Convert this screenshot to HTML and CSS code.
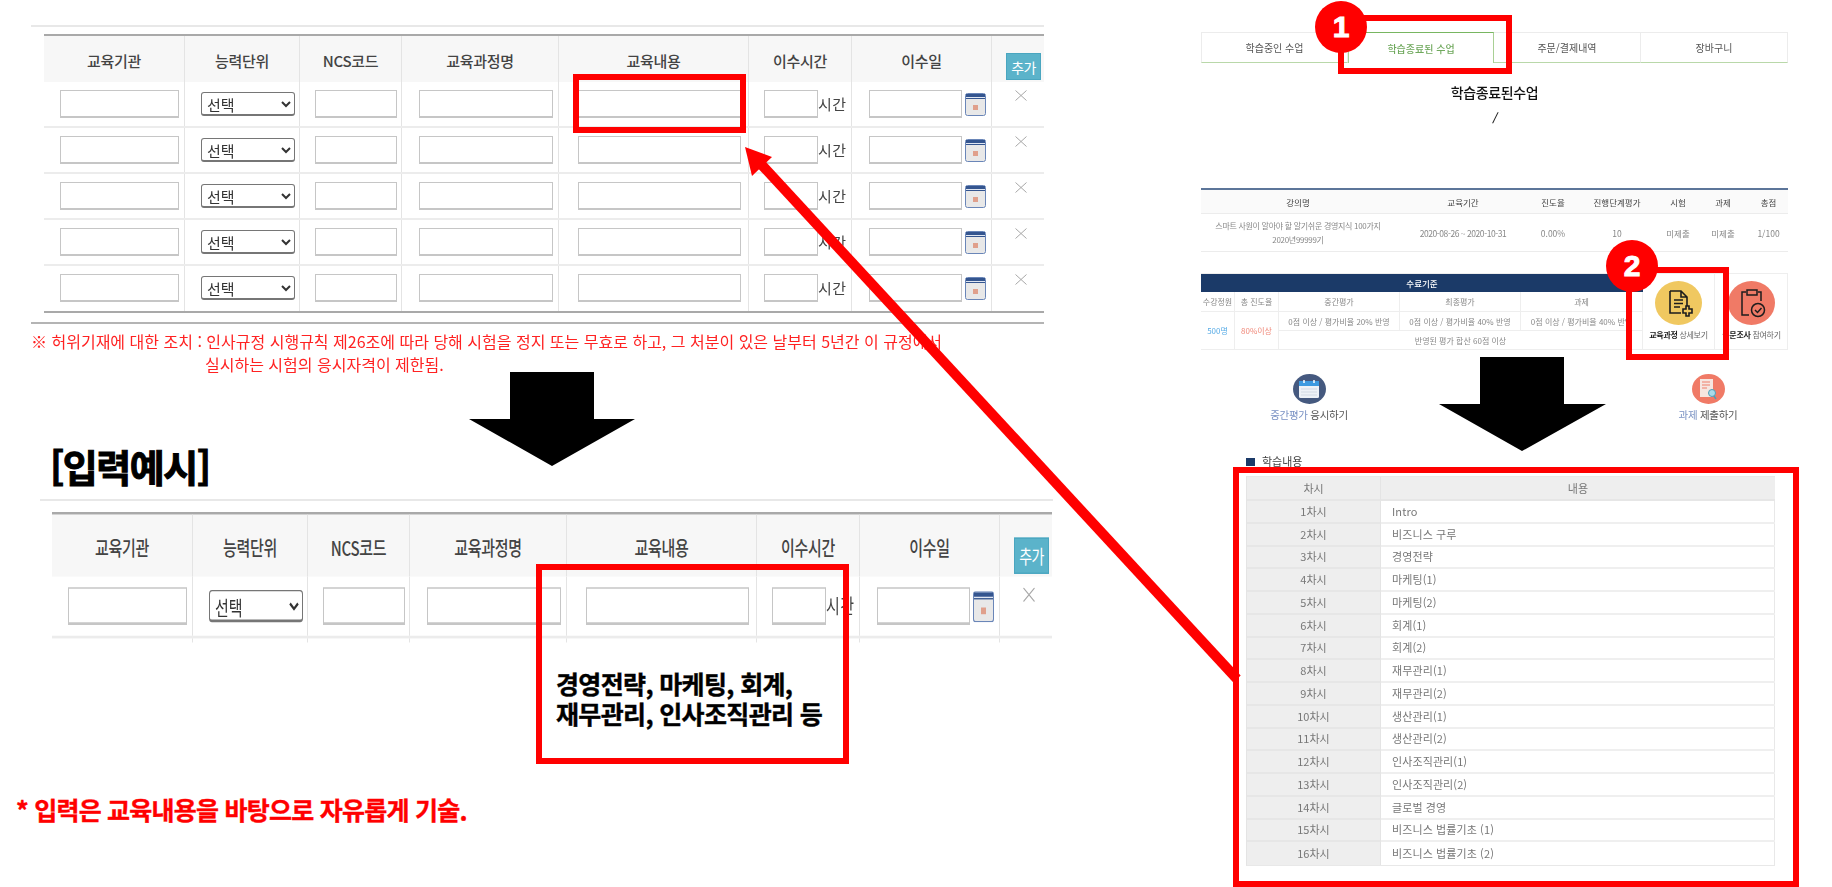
FILE: index.html
```html
<!DOCTYPE html>
<html lang="ko">
<head>
<meta charset="utf-8">
<title>학습종료된수업 입력예시</title>
<link rel="stylesheet" href="styles.css">
</head>
<body>
<svg class="defs" width="0" height="0">
  <symbol id="cal" viewBox="0 0 21 23">
    <rect x="0.5" y="0.5" width="20" height="22" rx="2" fill="#e8e8e8" stroke="#6a86b8"/>
    <rect x="1" y="1" width="19" height="5" fill="#34558f"/>
    <rect x="1" y="4" width="19" height="1" fill="#dfe6f2"/>
    <rect x="8" y="12" width="5" height="5" fill="#e0a08c"/>
  </symbol>
  <symbol id="del" viewBox="0 0 12 11">
    <path d="M0.5 0.5 L11.500 10.500 M11.500 0.5 L0.5 10.500" stroke="#a8a8a8" stroke-width="1" fill="none"/>
  </symbol>
</svg>
<main class="canvas">

  <section class="form form-a">
    <div class="frow fhead">
      <div>교육기관</div><div>능력단위</div><div>NCS코드</div><div>교육과정명</div><div>교육내용</div><div>이수시간</div><div>이수일</div><div class="addcell"><button class="add">추가</button></div>
    </div>
    <div class="frow">
      <div><input class="w1"></div><div><select class="sel"><option>선택</option></select></div><div><input class="w3"></div><div><input class="w4"></div><div><input class="w5"></div><div><input class="w6"><span>시간</span></div><div><input class="w7"><svg class="cal"><use href="#cal"/></svg></div><div class="xcell"><svg class="x"><use href="#del"/></svg></div>
    </div>
    <div class="frow">
      <div><input class="w1"></div><div><select class="sel"><option>선택</option></select></div><div><input class="w3"></div><div><input class="w4"></div><div><input class="w5"></div><div><input class="w6"><span>시간</span></div><div><input class="w7"><svg class="cal"><use href="#cal"/></svg></div><div class="xcell"><svg class="x"><use href="#del"/></svg></div>
    </div>
    <div class="frow">
      <div><input class="w1"></div><div><select class="sel"><option>선택</option></select></div><div><input class="w3"></div><div><input class="w4"></div><div><input class="w5"></div><div><input class="w6"><span>시간</span></div><div><input class="w7"><svg class="cal"><use href="#cal"/></svg></div><div class="xcell"><svg class="x"><use href="#del"/></svg></div>
    </div>
    <div class="frow">
      <div><input class="w1"></div><div><select class="sel"><option>선택</option></select></div><div><input class="w3"></div><div><input class="w4"></div><div><input class="w5"></div><div><input class="w6"><span>시간</span></div><div><input class="w7"><svg class="cal"><use href="#cal"/></svg></div><div class="xcell"><svg class="x"><use href="#del"/></svg></div>
    </div>
    <div class="frow flast">
      <div><input class="w1"></div><div><select class="sel"><option>선택</option></select></div><div><input class="w3"></div><div><input class="w4"></div><div><input class="w5"></div><div><input class="w6"><span>시간</span></div><div><input class="w7"><svg class="cal"><use href="#cal"/></svg></div><div class="xcell"><svg class="x"><use href="#del"/></svg></div>
    </div>
  </section>

  <div class="rule rule-a1"></div>
  <div class="rule rule-a2"></div>
  <div class="warn">
    <p>※ 허위기재에 대한 조치 : 인사규정 시행규칙 제26조에 따라 당해 시험을 정지 또는 무효로 하고, 그 처분이 있은 날부터 5년간 이 규정에서</p>
    <p class="warn2">실시하는 시험의 응시자격이 제한됨.</p>
  </div>

  <h2 class="example">[입력예시]</h2>
  <div class="rule rule-b1"></div>

  <section class="form form-b">
    <div class="frow fhead">
      <div>교육기관</div><div>능력단위</div><div>NCS코드</div><div>교육과정명</div><div>교육내용</div><div>이수시간</div><div>이수일</div><div class="addcell"><button class="add">추가</button></div>
    </div>
    <div class="frow">
      <div><input class="w1"></div><div><select class="sel"><option>선택</option></select></div><div><input class="w3"></div><div><input class="w4"></div><div><input class="w5"></div><div><input class="w6"><span>시간</span></div><div><input class="w7"><svg class="cal"><use href="#cal"/></svg></div><div class="xcell"><svg class="x"><use href="#del"/></svg></div>
    </div>
    <div class="frow ftail"><div></div><div></div><div></div><div></div><div></div><div></div><div></div><div></div></div>
  </section>

  <p class="sample">경영전략, 마케팅, 회계,<br>재무관리, 인사조직관리 등</p>
  <p class="freeform">* 입력은 교육내용을 바탕으로 자유롭게 기술.</p>

  <section class="shot shot-top">
    <nav class="tabs">
      <a class="tab">학습중인 수업</a>
      <a class="tab on">학습종료된 수업</a>
      <a class="tab">주문/결제내역</a>
      <a class="tab">장바구니</a>
    </nav>
    <h1 class="title">학습종료된수업</h1>
    <p class="slash">/</p>
    <div class="course chead">
      <div>강의명</div><div>교육기간</div><div>진도율</div><div>진행단계평가</div><div>시험</div><div>과제</div><div>총점</div>
    </div>
    <div class="course cbody">
      <div class="cname">스마트 사원이 알아야 할 알기쉬운 경영지식 100가지<br>2020년99999기</div><div class="cdate">2020-08-26 ~ 2020-10-31</div><div>0.00%</div><div>10</div><div>미제출</div><div>미제출</div><div>1/100</div>
    </div>
    <div class="criteria">
      <div class="cgrid">
        <div class="cnavy">수료기준</div>
        <div class="ch">수강정원</div><div class="ch">총 진도율</div><div class="ch">중간평가</div><div class="ch">최종평가</div><div class="ch">과제</div>
        <div class="cspan blue">500명</div><div class="cspan salmon">80%이상</div>
        <div class="cd">0점 이상 / 평가비율 20% 반영</div><div class="cd">0점 이상 / 평가비율 40% 반영</div><div class="cd">0점 이상 / 평가비율 40% 반영</div>
        <div class="cwide">반영된 평가 합산 60점 이상</div>
      </div>
      <div class="act">
        <div class="disc yellow">
          <svg width="30" height="30" viewBox="0 0 30 30" fill="none" stroke="#1d1d1d" stroke-width="1.6"><path d="M6 3h11l6 6v9M6 3v22h11M17 3v6h6M10 12h9M10 15.500h9M10 19h6"/><path d="M22 18v3h-3v4h3v3h3v-3h3v-4h-3v-3z" fill="#f2c75c"/></svg>
        </div>
        <p><b>교육과정</b> 상세보기</p>
      </div>
      <div class="act">
        <div class="disc coral">
          <svg width="30" height="30" viewBox="0 0 30 30" fill="none" stroke="#1d1d1d" stroke-width="1.5"><path d="M9 4H5v23h7M21 4h3v9M10 2h10v5H10z"/><circle cx="21" cy="22" r="6.500"/><path d="M18 22l2.500 2.500 4-4.500"/></svg>
        </div>
        <p><b>설문조사</b> 참여하기</p>
      </div>
    </div>
  </section>

  <div class="go go-a">
    <div class="gdisc navy">
      <svg width="20" height="18" viewBox="0 0 20 18"><rect x="0" y="1" width="20" height="17" rx="1.500" fill="#eef2f7"/><rect x="0" y="1" width="20" height="5" fill="#3d9ae0"/><path d="M5 0v3M15 0v3" stroke="#fff" stroke-width="1.500"/><path d="M2 9h16M2 12h16M2 15h16" stroke="#d2dae4"/></svg>
    </div>
    <p><span>중간평가</span> 응시하기</p>
  </div>
  <div class="go go-b">
    <div class="gdisc coral">
      <svg width="20" height="22" viewBox="0 0 20 22"><rect x="2" y="1" width="13" height="18" fill="#f6e6e0"/><path d="M4 4h8M4 7h8M4 10h5" stroke="#ee7f6b"/><circle cx="14" cy="15" r="3.500" fill="#a9dbe9" stroke="#4e9db6"/><path d="M16 18l2 3" stroke="#4e9db6" stroke-width="1.500"/></svg>
    </div>
    <p><span>과제</span> 제출하기</p>
  </div>

  <section class="study">
    <h3 class="shead">학습내용</h3>
    <div class="slist">
      <div class="k top">차시</div><div class="v top">내용</div>
      <div class="k">1차시</div><div class="v">Intro</div>
      <div class="k">2차시</div><div class="v">비즈니스 구루</div>
      <div class="k">3차시</div><div class="v">경영전략</div>
      <div class="k">4차시</div><div class="v">마케팅(1)</div>
      <div class="k">5차시</div><div class="v">마케팅(2)</div>
      <div class="k">6차시</div><div class="v">회계(1)</div>
      <div class="k">7차시</div><div class="v">회계(2)</div>
      <div class="k">8차시</div><div class="v">재무관리(1)</div>
      <div class="k">9차시</div><div class="v">재무관리(2)</div>
      <div class="k">10차시</div><div class="v">생산관리(1)</div>
      <div class="k">11차시</div><div class="v">생산관리(2)</div>
      <div class="k">12차시</div><div class="v">인사조직관리(1)</div>
      <div class="k">13차시</div><div class="v">인사조직관리(2)</div>
      <div class="k">14차시</div><div class="v">글로벌 경영</div>
      <div class="k">15차시</div><div class="v">비즈니스 법률기초 (1)</div>
      <div class="k">16차시</div><div class="v">비즈니스 법률기초 (2)</div>
    </div>
  </section>

  <svg class="overlay" viewBox="0 0 1832 887" width="1832" height="887">
    <polygon points="510,372 594,372 594,419 635,419 552,466 469,419 510,419" fill="#000"/>
    <polygon points="1480,357 1564,357 1564,404 1606,404 1522,451 1439,404 1480,404" fill="#000"/>
    <line x1="760" y1="163" x2="1237" y2="679" stroke="#f00" stroke-width="10"/>
    <polygon points="745,147 772,157 752,176" fill="#f00"/>
  </svg>

  <div class="box box-1"></div>
  <div class="box box-2"></div>
  <div class="box box-3"></div>
  <div class="box box-4"></div>
  <div class="box box-5"></div>
  <div class="num num-1">1</div>
  <div class="num num-2">2</div>
</main>
</body>
</html>
```
FILE: styles.css
```css
* { box-sizing: border-box; }
html, body { margin: 0; padding: 0; background: #fff; }
body { font-family: "Noto Sans CJK KR", "Noto Sans", sans-serif; overflow: hidden; }
p, h1, h2, h3 { margin: 0; font-weight: normal; }
.defs { position: absolute; }
.canvas { position: relative; width: 1832px; height: 887px; overflow: hidden; background: #fff; }

/* form table */
.form { position: absolute; width: 1000px; border-top: 2px solid #a9a9a9; filter: blur(.3px); color: #444; font-size: 15px; }
.form-a { left: 44px; top: 34px; }
.form-b { left: 52px; top: 512px; transform: scaleY(1.345); transform-origin: top left; }
.frow { display: grid; grid-template-columns: 141px 115px 102px 157px 190px 103px 140px 52px; height: 46px; border-bottom: 2px solid #ececec; }
.frow > div { display: flex; align-items: center; border-right: 1px solid #e4e4e4; }
.frow > div:last-child { border-right: 0; }
.frow > div:nth-child(1) { padding-left: 16px; }
.frow > div:nth-child(2) { padding-left: 16px; }
.frow > div:nth-child(3) { padding-left: 15px; }
.frow > div:nth-child(4) { padding-left: 17px; }
.frow > div:nth-child(5) { padding-left: 19px; }
.frow > div:nth-child(6) { padding-left: 15px; }
.frow > div:nth-child(7) { padding-left: 17px; }
.fhead { background: #f7f7f7; border-bottom: 0; }
.fhead > div { justify-content: center; padding: 2px 0 0 !important; font-weight: 500; letter-spacing: -.3px; }
.flast { border-bottom: 2px solid #a9a9a9; height: 47px; }
.ftail { height: 3px; border-bottom: 0; }
.frow span { margin-bottom: 2px; letter-spacing: .5px; }
.frow input { height: 28px; border: 1px solid #c6c6c6; border-bottom-width: 2px; background: #fff; padding: 0; margin: 0 0 1px; flex: none; }
.w1 { width: 119px; }
.w3 { width: 82px; }
.w4 { width: 134px; }
.w5 { width: 163px; }
.w6 { width: 54px; }
.w7 { width: 93px; }
.sel { width: 94px; height: 24px; font: 15px "Noto Sans CJK KR", sans-serif; color: #333; background: #fff; border: 1px solid #767676; border-bottom-width: 2px; border-radius: 3px; padding: 0 0 0 1px; margin: 0 0 1px; }
.cal { width: 21px; height: 23px; margin-left: 3px; flex: none; }
.x { width: 12px; height: 11px; margin: 0 0 0 23px; flex: none; }
.frow > .xcell { align-items: flex-start; padding-top: 8px; }
.fhead > .addcell { align-items: flex-end; justify-content: flex-start; padding: 0 0 2px 14px !important; }
.add { width: 35px; height: 27px; background: #5bb3ca; border: 1px solid #4aa6c0; color: #fff; font: 14px "Noto Sans CJK KR", sans-serif; padding: 0; letter-spacing: -.6px; }

.rule { position: absolute; height: 2px; }
.rule-a1 { left: 31px; top: 25px; width: 1013px; background: #e8e8e8; }
.rule-a2 { left: 31px; top: 322px; width: 1013px; background: #b4b4b4; }
.rule-b1 { left: 40px; top: 499px; width: 1013px; background: #e8e8e8; }

.warn { position: absolute; left: 31px; top: 330px; width: 980px; color: #f22; font-size: 16px; line-height: 23px; filter: blur(.3px); white-space: nowrap; }
.warn2 { padding-left: 174px; }

.example { position: absolute; left: 50px; top: 441px; font-size: 38px; line-height: 50px; font-weight: 700; color: #000; letter-spacing: -1.5px; -webkit-text-stroke: 1px #000; }
.sample { position: absolute; left: 556px; top: 668px; font-size: 25px; line-height: 30px; font-weight: 700; color: #000; letter-spacing: -.65px; white-space: nowrap; -webkit-text-stroke: .4px #000; }
.freeform { position: absolute; left: 16px; top: 792px; font-size: 25px; line-height: 34px; font-weight: 700; color: #f00; letter-spacing: -.76px; white-space: nowrap; -webkit-text-stroke: .4px #f00; }

/* top-right screenshot */
.shot { position: absolute; left: 1201px; top: 32px; width: 587px; filter: blur(.35px); color: #555; }
.tabs { display: grid; grid-template-columns: 147px 146px 147px 147px; height: 31px; }
.tab { display: flex; align-items: center; justify-content: center; font-size: 10px; color: #555; border-top: 1px solid #ececec; border-right: 1px solid #ececec; border-bottom: 1px solid #b9d8a9; }
.tab:first-child { border-left: 1px solid #ececec; }
.tab.on { color: #6fa85c; font-weight: 500; border: 1px solid #a9d095; border-top: 1px solid #78b661; border-bottom: 0; }
.title { margin-top: 19px; text-align: center; font-size: 14px; line-height: 20px; color: #111; font-weight: 500; letter-spacing: -.35px; }
.slash { margin-top: 7px; text-align: center; font-size: 11px; line-height: 16px; font-weight: 700; font-style: italic; color: #222; height: 79px; }
.course { display: grid; grid-template-columns: 194px 136px 44px 84px 38px 52px 39px; font-size: 8.5px; text-align: center; }
.course > div { display: flex; align-items: center; justify-content: center; }
.chead { height: 26px; background: #fafafa; border-top: 2px solid #5c7599; border-bottom: 1px solid #ececec; color: #444; }
.cbody { height: 38px; border-bottom: 1px solid #ececec; color: #888; font-size: 8.5px; }
.cbody > .cname { line-height: 14px; font-size: 8px; letter-spacing: -.3px; }
.cbody > .cdate { letter-spacing: -.45px; }
.criteria { display: grid; grid-template-columns: 442px 72px 73px; margin-top: 21px; height: 77px; border-right: 1px solid #eee; border-bottom: 1px solid #eee; border-top: 1px solid #eee; }
.cgrid { display: grid; grid-template-columns: 34px 44px 121px 121px 122px; grid-template-rows: 18px 20px 19px 19px; font-size: 8px; color: #888; text-align: center; }
.cgrid > div { display: flex; align-items: center; justify-content: center; border-right: 1px solid #eee; border-bottom: 1px solid #eee; }
.cgrid > .cnavy { grid-column: 1 / 6; background: #1b3a68; color: #fff; font-weight: 500; font-size: 8.5px; border: 0; }
.cgrid > .cspan { grid-row: 3 / 5; }
.cgrid > .cwide { grid-column: 3 / 6; }
.blue { color: #57abe6; }
.salmon { color: #f0897a; }
.act { display: flex; flex-direction: column; align-items: center; padding-top: 7px; border-right: 1px solid #eee; }
.act:last-child { border-right: 0; }
.act p { margin-top: 5px; font-size: 8px; line-height: 10px; color: #666; white-space: nowrap; letter-spacing: -.3px; }
.act b { color: #222; font-weight: 700; }
.disc { width: 47px; height: 44px; border-radius: 50%; display: flex; align-items: center; justify-content: center; flex: none; }
.yellow { background: #f0c860; }
.coral { background: #f07a66; }

.go { position: absolute; top: 374px; display: flex; flex-direction: column; align-items: center; filter: blur(.35px); width: 100px; }
.go-a { left: 1259px; }
.go-b { left: 1658px; }
.go p { margin-top: 3px; font-size: 10.5px; line-height: 16px; color: #555; white-space: nowrap; letter-spacing: -.3px; }
.go span { color: #7a92c4; }
.gdisc { width: 33px; height: 30px; border-radius: 50%; display: flex; align-items: center; justify-content: center; }
.navy { background: #45597f; }

.study { position: absolute; left: 1246px; top: 453px; width: 529px; filter: blur(.35px); }
.shead { height: 23px; padding-left: 16px; font-size: 11px; line-height: 16px; color: #444; position: relative; }
.shead::before { content: ""; position: absolute; left: 0; top: 5px; width: 9px; height: 8px; background: #1b3a68; }
.slist { display: grid; grid-template-columns: 134px 394px; grid-template-rows: 24px repeat(16, 22.75px); width: 529px; border: 1px solid #e8e8e8; border-left: 1px solid #e4e4e4; font-size: 11px; color: #777; }
.k, .v { display: flex; align-items: center; padding-bottom: 1px; border-bottom: 2px solid #efefef; }
.k { justify-content: center; background: #eeeeee; border-bottom-color: #e6e6e6; border-right: 1px solid #e4e4e4; }
.v { padding-left: 11px; letter-spacing: .1px; }
.v.top { justify-content: center; background: #eeeeee; padding-left: 0; border-bottom-color: #e6e6e6; }
.slist > :nth-last-child(-n+2) { border-bottom: 0; }

/* annotations */
.overlay { position: absolute; left: 0; top: 0; pointer-events: none; }
.box { position: absolute; border: 6px solid #f00; }
.box-1 { left: 573px; top: 74px; width: 173px; height: 59px; }
.box-2 { left: 536px; top: 564px; width: 313px; height: 200px; }
.box-3 { left: 1338px; top: 15px; width: 174px; height: 59px; }
.box-4 { left: 1626px; top: 267px; width: 103px; height: 93px; }
.box-5 { left: 1233px; top: 467px; width: 566px; height: 420px; }
.num { position: absolute; width: 52px; height: 52px; border-radius: 50%; background: #f00; color: #fff; display: flex; align-items: center; justify-content: center; font: 700 30px/1 "Liberation Sans", sans-serif; -webkit-text-stroke: 1px #fff; }
.num-1 { left: 1315px; top: 1px; }
.num-2 { left: 1606px; top: 240px; }
```
